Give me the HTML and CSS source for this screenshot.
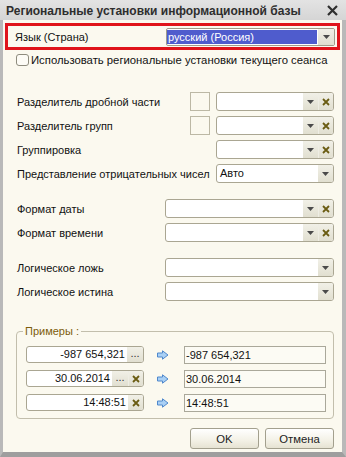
FILE: index.html
```html
<!DOCTYPE html>
<html lang="ru">
<head>
<meta charset="utf-8">
<link rel="stylesheet" href="styles.css">
</head>
<body>
<div class="window">
  <div class="titlebar">
    <span class="title">Региональные установки информационной базы</span>
    <svg class="close" width="11" height="11" viewBox="0 0 11 11"><path d="M1 1 L10 10 M10 1 L1 10" stroke="#2f2f2f" stroke-width="2.2" fill="none"/></svg>
  </div>
  <div class="content">
    <div class="lang-frame">
      <span class="label">Язык (Страна)</span>
      <div class="field lang-field">
        <span class="val"><span class="selected">русский (Россия)</span></span>
        <span class="btn drop"><svg width="7" height="4" viewBox="0 0 7 4"><path d="M0 0 H7 L3.5 4 Z" fill="#4a4a4a"/></svg></span>
      </div>
    </div>
    <div class="check-row">
      <span class="checkbox"></span>
      <span class="check-text">Использовать региональные установки текущего сеанса</span>
    </div>

    <div class="rows rows-num">
      <div class="row">
        <span class="label">Разделитель дробной части</span>
        <span class="square"></span>
        <div class="field combo-s">
          <span class="val"></span>
          <span class="btn drop"><svg width="7" height="4" viewBox="0 0 7 4"><path d="M0 0 H7 L3.5 4 Z" fill="#4a4a4a"/></svg></span>
          <span class="btn clear"><svg width="8" height="8" viewBox="0 0 8 8"><path d="M1 1 L7 7 M7 1 L1 7" stroke="#6a5c12" stroke-width="1.8" fill="none"/></svg></span>
        </div>
      </div>
      <div class="row">
        <span class="label">Разделитель групп</span>
        <span class="square"></span>
        <div class="field combo-s">
          <span class="val"></span>
          <span class="btn drop"><svg width="7" height="4" viewBox="0 0 7 4"><path d="M0 0 H7 L3.5 4 Z" fill="#4a4a4a"/></svg></span>
          <span class="btn clear"><svg width="8" height="8" viewBox="0 0 8 8"><path d="M1 1 L7 7 M7 1 L1 7" stroke="#6a5c12" stroke-width="1.8" fill="none"/></svg></span>
        </div>
      </div>
      <div class="row">
        <span class="label">Группировка</span>
        <div class="field combo-s">
          <span class="val"></span>
          <span class="btn drop"><svg width="7" height="4" viewBox="0 0 7 4"><path d="M0 0 H7 L3.5 4 Z" fill="#4a4a4a"/></svg></span>
          <span class="btn clear"><svg width="8" height="8" viewBox="0 0 8 8"><path d="M1 1 L7 7 M7 1 L1 7" stroke="#6a5c12" stroke-width="1.8" fill="none"/></svg></span>
        </div>
      </div>
      <div class="row">
        <span class="label">Представление отрицательных чисел</span>
        <div class="field combo-s">
          <span class="val">Авто</span>
          <span class="btn drop"><svg width="7" height="4" viewBox="0 0 7 4"><path d="M0 0 H7 L3.5 4 Z" fill="#4a4a4a"/></svg></span>
        </div>
      </div>
    </div>

    <div class="rows rows-fmt">
      <div class="row">
        <span class="label">Формат даты</span>
        <div class="field combo-l">
          <span class="val"></span>
          <span class="btn drop"><svg width="7" height="4" viewBox="0 0 7 4"><path d="M0 0 H7 L3.5 4 Z" fill="#4a4a4a"/></svg></span>
          <span class="btn clear"><svg width="8" height="8" viewBox="0 0 8 8"><path d="M1 1 L7 7 M7 1 L1 7" stroke="#6a5c12" stroke-width="1.8" fill="none"/></svg></span>
        </div>
      </div>
      <div class="row">
        <span class="label">Формат времени</span>
        <div class="field combo-l">
          <span class="val"></span>
          <span class="btn drop"><svg width="7" height="4" viewBox="0 0 7 4"><path d="M0 0 H7 L3.5 4 Z" fill="#4a4a4a"/></svg></span>
          <span class="btn clear"><svg width="8" height="8" viewBox="0 0 8 8"><path d="M1 1 L7 7 M7 1 L1 7" stroke="#6a5c12" stroke-width="1.8" fill="none"/></svg></span>
        </div>
      </div>
    </div>

    <div class="rows rows-bool">
      <div class="row">
        <span class="label">Логическое ложь</span>
        <div class="field combo-l">
          <span class="val"></span>
          <span class="btn drop"><svg width="7" height="4" viewBox="0 0 7 4"><path d="M0 0 H7 L3.5 4 Z" fill="#4a4a4a"/></svg></span>
        </div>
      </div>
      <div class="row">
        <span class="label">Логическое истина</span>
        <div class="field combo-l">
          <span class="val"></span>
          <span class="btn drop"><svg width="7" height="4" viewBox="0 0 7 4"><path d="M0 0 H7 L3.5 4 Z" fill="#4a4a4a"/></svg></span>
        </div>
      </div>
    </div>

    <div class="group">
      <span class="group-label">Примеры :</span>
      <div class="ex-row">
        <div class="field ex-in">
          <span class="val right">-987 654,321</span>
          <span class="btn dots">...</span>
        </div>
        <svg class="arrow" width="12" height="10" viewBox="0 0 12 10"><path d="M0.5 3 H5.5 V0.8 L11 5 L5.5 9.2 V7 H0.5 Z" fill="#a9d0f5" stroke="#4f88cc" stroke-width="1"/></svg>
        <div class="ex-out">-987 654,321</div>
      </div>
      <div class="ex-row">
        <div class="field ex-in">
          <span class="val right">30.06.2014</span>
          <span class="btn dots">...</span>
          <span class="btn clear"><svg width="8" height="8" viewBox="0 0 8 8"><path d="M1 1 L7 7 M7 1 L1 7" stroke="#6a5c12" stroke-width="1.8" fill="none"/></svg></span>
        </div>
        <svg class="arrow" width="12" height="10" viewBox="0 0 12 10"><path d="M0.5 3 H5.5 V0.8 L11 5 L5.5 9.2 V7 H0.5 Z" fill="#a9d0f5" stroke="#4f88cc" stroke-width="1"/></svg>
        <div class="ex-out">30.06.2014</div>
      </div>
      <div class="ex-row">
        <div class="field ex-in">
          <span class="val right">14:48:51</span>
          <span class="btn clear"><svg width="8" height="8" viewBox="0 0 8 8"><path d="M1 1 L7 7 M7 1 L1 7" stroke="#6a5c12" stroke-width="1.8" fill="none"/></svg></span>
        </div>
        <svg class="arrow" width="12" height="10" viewBox="0 0 12 10"><path d="M0.5 3 H5.5 V0.8 L11 5 L5.5 9.2 V7 H0.5 Z" fill="#a9d0f5" stroke="#4f88cc" stroke-width="1"/></svg>
        <div class="ex-out">14:48:51</div>
      </div>
    </div>

    <div class="buttons">
      <button class="button">OK</button>
      <button class="button">Отмена</button>
    </div>
  </div>
</div>
</body>
</html>
```

FILE: styles.css
```css
* { box-sizing: border-box; }
html, body { margin: 0; padding: 0; }
body {
  width: 346px;
  height: 457px;
  overflow: hidden;
  font-family: "Liberation Sans", Arial, sans-serif;
  font-size: 11px;
  color: #111;
  background: #a8a8a8;
}
.window {
  width: 346px;
  height: 457px;
  display: flex;
  flex-direction: column;
  background: #fbf9ef;
  border-left: 3px solid #b9b9b9;
  border-right: 4px solid #b9b9b9;
  border-bottom: 5px solid #9e9e9e;
}
.titlebar {
  height: 20px;
  margin: 0 -4px 0 -3px;
  padding: 0 8px 0 6px;
  display: flex;
  align-items: center;
  justify-content: space-between;
  background: linear-gradient(#e3e3e3, #d5d5d5);
}
.title {
  font-weight: bold;
  font-size: 12px;
  color: #2e2e2e;
  margin-top: 2px;
}
.close { margin-top: 1px; }
.content {
  flex: 1;
  display: flex;
  flex-direction: column;
  padding: 0 8px 0 13px;
}
.lang-frame {
  margin: 3px -6px 0 -11px;
  height: 27px;
  border: 3px solid #e0141b;
  display: flex;
  align-items: center;
  padding: 0 2px 0 7px;
}
.lang-frame .label { flex: 1; }
.field {
  height: 19px;
  border: 1px solid #aaa692;
  border-radius: 3px;
  background: #fff;
  display: flex;
  align-items: stretch;
  overflow: hidden;
}
.lang-field {
  width: 169px;
  height: 18px;
  border-radius: 2px;
  border-color: #9f9c8a;
}
.val {
  flex: 1;
  min-width: 0;
  padding: 0 3px;
  line-height: 17px;
  white-space: nowrap;
  overflow: hidden;
}
.lang-field .val { padding: 1px 1px 1px 0; line-height: 14px; display: flex; }
.selected {
  flex: 1;
  background: #4f5ccd;
  color: #fff;
  padding: 0 1px;
}
.val.right { text-align: right; padding-right: 2px; }
.btn {
  width: 15px;
  display: flex;
  align-items: center;
  justify-content: center;
  background: linear-gradient(#f1f0e7, #e1dfd0);
}
.lang-field .btn { width: 16px; }
.btn + .btn { border-left: 1px solid #eeede4; }
.dots {
  width: 16px;
  font-size: 11px;
  line-height: 13px;
  align-items: flex-start;
  letter-spacing: 0;
  color: #333;
}
.check-row {
  margin-top: 3px;
  height: 13px;
  display: flex;
  align-items: center;
  white-space: nowrap;
}
.check-text { font-size: 11.3px; }
.checkbox {
  width: 13px;
  height: 12px;
  border: 1px solid #8e8c7e;
  border-radius: 3px;
  background: #fdfcf6;
  margin-right: 2px;
}
.rows {
  display: flex;
  flex-direction: column;
  gap: 5px;
}
.rows-num { margin-top: 26px; }
.rows-fmt, .rows-bool { margin-top: 16px; }
.row {
  height: 19px;
  display: flex;
  align-items: center;
}
.row .label { flex: 1; padding-left: 1px; white-space: nowrap; }
.square {
  width: 20px;
  height: 19px;
  border: 1px solid #bcb8a5;
  margin-right: 6px;
}
.combo-s { width: 118px; }
.combo-l { width: 169px; }
.group {
  position: relative;
  margin-top: 30px;
  height: 88px;
  width: 318px;
  border: 1px solid #c2beac;
  border-radius: 4px;
  padding: 14px 0 0 9px;
  display: flex;
  flex-direction: column;
  gap: 7px;
}
.group-label {
  position: absolute;
  top: -8px;
  left: 6px;
  padding: 0 2px;
  background: #fbf9ef;
  color: #7d5d0c;
  line-height: 14px;
}
.ex-row {
  height: 17px;
  display: flex;
  align-items: center;
}
.ex-in {
  width: 118px;
  height: 17px;
}
.ex-in .val { line-height: 15px; }
.arrow { margin-left: 13px; }
.ex-out {
  margin-left: 15px;
  width: 142px;
  height: 18px;
  border: 1px solid #aaa89a;
  background: #fcfbf4;
  padding-left: 1px;
  line-height: 16px;
}
.buttons {
  margin-top: 9px;
  display: flex;
  justify-content: flex-end;
  gap: 6px;
}
.button {
  height: 21px;
  width: 69px;
  border: 1px solid #a3a08e;
  border-radius: 3px;
  background: linear-gradient(#ffffff, #f3f1e6 60%, #e6e3d3);
  font-family: "Liberation Sans", Arial, sans-serif;
  font-size: 11.3px;
  color: #1c1c1c;
  padding: 0;
}
```
